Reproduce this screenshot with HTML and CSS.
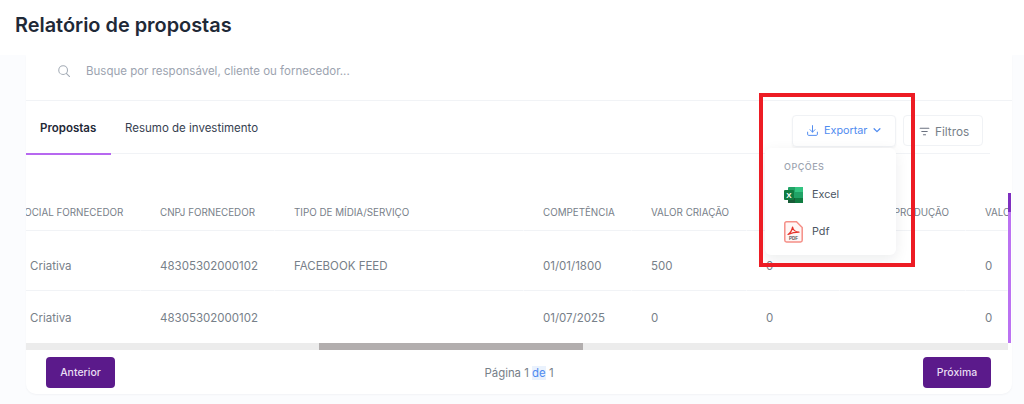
FILE: index.html
```html
<!DOCTYPE html>
<html lang="en">

<head>
	<meta charset="UTF-8">
	<title>Relatório de propostas</title>
	<link rel="stylesheet" href="styles.css">
</head>

<body>

	<header class="page-header">
		<h1 class="page-title">Relatório de propostas</h1>
	</header>

	<main class="page-content">
		<section class="card">

			<!-- Search -->
			<div class="search-row">
				<svg class="search-icon" viewBox="0 0 24 24" fill="none" stroke="#a3abb5" stroke-width="1.8" stroke-linecap="round">
					<circle cx="10.5" cy="10.5" r="7.5"/>
					<path d="M16 16l5.5 5.5"/>
				</svg>
				<span class="search-text">Busque por responsável, cliente ou fornecedor...</span>
			</div>

			<!-- Tabs -->
			<div class="tabs-row">
				<div class="tabs">
					<div class="tab tab-active">Propostas</div>
					<div class="tab">Resumo de investimento</div>
				</div>
				<div class="tab-actions">
					<div class="btn-export">
						<svg class="btn-icon" viewBox="0 0 24 24" fill="none" stroke="#4f8bf0" stroke-width="1.8" stroke-linecap="round" stroke-linejoin="round">
							<path d="M12 3v12M7.500 10.500L12 15l4.500-4.500"/>
							<path d="M3 15v4a2 2 0 0 0 2 2h14a2 2 0 0 0 2-2v-4"/>
						</svg>
						<span>Exportar</span>
						<svg class="btn-chevron" viewBox="0 0 12 12" fill="none" stroke="#4f8bf0" stroke-width="1.5" stroke-linecap="round" stroke-linejoin="round">
							<path d="M2.500 4.500L6 8l3.500-3.500"/>
						</svg>
					</div>
					<div class="btn-filter">
						<svg class="btn-icon" viewBox="0 0 24 24" fill="none" stroke="#6b7280" stroke-width="2" stroke-linecap="round">
							<path d="M4 6h16M7 12h10M10 18h4"/>
						</svg>
						<span>Filtros</span>
					</div>
				</div>
			</div>

			<!-- Table -->
			<div class="table-area">
				<div class="table-clip">
					<table class="report-table">
						<thead>
							<tr>
								<th class="col-razao">RAZÃO SOCIAL FORNECEDOR</th>
								<th class="col-cnpj">CNPJ FORNECEDOR</th>
								<th class="col-tipo">TIPO DE MÍDIA/SERVIÇO</th>
								<th class="col-comp">COMPETÊNCIA</th>
								<th class="col-criacao">VALOR CRIAÇÃO</th>
								<th class="col-midia">VALOR MÍDIA</th>
								<th class="col-prod">VALOR PRODUÇÃO</th>
								<th class="col-total">VALOR TOTAL</th>
							</tr>
						</thead>
						<tbody>
							<tr>
								<td>Criativa</td>
								<td>48305302000102</td>
								<td>FACEBOOK FEED</td>
								<td>01/01/1800</td>
								<td>500</td>
								<td>0</td>
								<td></td>
								<td>0</td>
							</tr>
							<tr>
								<td>Criativa</td>
								<td>48305302000102</td>
								<td></td>
								<td>01/07/2025</td>
								<td>0</td>
								<td>0</td>
								<td></td>
								<td>0</td>
							</tr>
						</tbody>
					</table>
				</div>
				<div class="v-scroll">
					<div class="v-scroll-top"></div>
				</div>
			</div>

			<div class="h-scroll">
				<div class="h-scroll-thumb"></div>
			</div>

			<!-- Pagination -->
			<div class="pager">
				<div class="pager-btn">Anterior</div>
				<div class="pager-text">Página 1 <span class="pager-select">de</span> 1</div>
				<div class="pager-btn pager-btn-next">Próxima</div>
			</div>
		</section>
	</main>

	<!-- Export menu -->
	<div class="export-menu">
		<div class="export-label">OPÇÕES</div>
		<div class="export-item">
			<svg class="icon-excel" viewBox="0 0 19 16">
				<rect x="4" y="0" width="15" height="16" rx="1" fill="#21a366"/>
				<rect x="11" y="0" width="8" height="5" fill="#33c481"/>
				<rect x="11" y="11" width="8" height="5" fill="#107c41"/>
				<rect x="4" y="11" width="7" height="5" fill="#185c37"/>
				<rect x="0" y="3" width="10" height="10" rx="1" fill="#107c41"/>
				<text x="5" y="11" class="excel-x">X</text>
			</svg>
			<span>Excel</span>
		</div>
		<div class="export-item">
			<svg class="icon-pdf" viewBox="0 0 19 22">
				<path d="M.8 2.500a1.700 1.700 0 0 1 1.700-1.700h10l5.700 5.700v12.700a1.700 1.700 0 0 1-1.700 1.700h-14a1.700 1.700 0 0 1-1.700-1.700z" fill="#fff6f5" stroke="#f58f87" stroke-width="1.500"/>
				<path d="M4 13.500c2.200-1.200 3.800-3.800 4.600-7.500.3 2.700 2.100 4.700 6.400 5.200-3.800 0-7 .6-11 2.300z" fill="none" stroke="#e5332a" stroke-width="1.200" stroke-linejoin="round"/>
				<text x="9.500" y="19" class="pdf-label">PDF</text>
			</svg>
			<span>Pdf</span>
		</div>
	</div>

	<!-- Red highlight -->
	<div class="highlight-box"></div>

</body>

</html>
```

FILE: styles.css
```css
*
{
	box-sizing: border-box;
}

body
{
	margin: 0;
	height: 404px;
	overflow: hidden;
	display: flex;
	flex-direction: column;
	font-family: Inter, "Liberation Sans", sans-serif;
	background-color: #ffffff;
	color: #778089;
}

.page-header
{
	height: 55px;
	flex: none;
	padding: 12px 15px 0;
}

.page-title
{
	margin: 0;
	font-size: 19.900px;
	line-height: 26px;
	font-weight: 600;
	color: #1f2937;
}

.page-content
{
	flex: 1;
	padding: 0 12px 10px 26px;
	background-color: #fbfcfe;
}

.card
{
	height: 339px;
	display: flex;
	flex-direction: column;
	background-color: #ffffff;
	border-radius: 0 0 10px 10px;
	box-shadow: 0 1px 2px rgba(17, 24, 39, 0.04);
	overflow: hidden;
}

.search-row
{
	height: 46px;
	flex: none;
	display: flex;
	align-items: center;
	gap: 15px;
	padding: 0 0 14px 31px;
	border-bottom: 1px solid #f1f3f6;
}

.search-icon
{
	width: 14px;
	height: 14px;
}

.search-text
{
	font-size: 11.500px;
	color: #9ca3af;
}

.tabs-row
{
	height: 53px;
	flex: none;
	display: flex;
	justify-content: space-between;
	margin-right: 22px;
	border-bottom: 1px solid #f1f3f6;
}

.tabs
{
	flex: 1;
	display: flex;
}

.tab
{
	padding: 20px 14px 0;
	font-size: 11.500px;
	color: #374151;
}

.tab-active
{
	width: 85px;
	margin-bottom: -2px;
	font-weight: 600;
	color: #1f2937;
	border-bottom: 2px solid #b768f0;
}

.tab-actions
{
	display: flex;
	gap: 7px;
	padding: 14px 7px 0 0;
	align-items: flex-start;
}

.btn-export,
.btn-filter
{
	display: flex;
	align-items: center;
	border: 1px solid #f0f2f5;
	border-radius: 4px;
}

.btn-export
{
	width: 104px;
	height: 32px;
	gap: 5px;
	padding: 0 0 2px 13px;
	font-size: 10.800px;
	color: #4f8bf0;
	box-shadow: 0 1px 2px rgba(17, 24, 39, 0.05);
}

.btn-filter
{
	width: 80px;
	height: 31px;
	gap: 4px;
	padding: 2px 0 0 14px;
	font-size: 11.800px;
	color: #778089;
}

.btn-icon
{
	width: 13px;
	height: 13px;
}

.btn-chevron
{
	width: 10px;
	height: 10px;
}

.table-area
{
	flex: 1;
	display: flex;
	min-height: 0;
}

.table-clip
{
	flex: 1;
	overflow: hidden;
}

.report-table
{
	width: 1048px;
	margin-left: -66px;
	border-collapse: separate;
	border-spacing: 0;
	table-layout: fixed;
}

.col-razao { width: 181px; }
.col-cnpj { width: 134px; }
.col-tipo { width: 249px; }
.col-comp { width: 108px; }
.col-criacao { width: 115px; }
.col-midia { width: 93px; }
.col-prod { width: 126px; }
.col-total { width: 42px; }

.report-table th,
.report-table td
{
	padding: 0 0 0 19px;
	text-align: left;
	white-space: nowrap;
	border-bottom: 1px solid #f1f3f6;
	border-right: 1px solid #ffffff;
}

.report-table th
{
	height: 77px;
	padding-top: 41px;
	font-size: 9.800px;
	font-weight: 400;
	color: #778089;
}

.report-table th:first-child
{
	padding-left: 22px;
}

.report-table td
{
	font-size: 11.500px;
	color: #778089;
}

.report-table td:first-child
{
	padding-left: 70px;
}

.report-table tbody tr:nth-child(1) td
{
	height: 60px;
	padding-top: 10px;
}

.report-table tbody tr:nth-child(2) td
{
	height: 52px;
	padding-top: 2px;
	border-bottom: none;
}

.v-scroll
{
	width: 3px;
	flex: none;
	margin-top: 39px;
	margin-right: 1px;
	background-color: #bb72f2;
}

.v-scroll-top
{
	height: 19px;
	background-color: #7e2fc0;
}

.h-scroll
{
	height: 7px;
	flex: none;
	background-color: #ececec;
	margin-right: 4px;
}

.h-scroll-thumb
{
	width: 264px;
	height: 7px;
	margin-left: 293px;
	background-color: #b2aeae;
}

.pager
{
	height: 44px;
	flex: none;
	display: flex;
	justify-content: space-between;
	align-items: flex-start;
	padding: 7px 21px 0 20px;
}

.pager-btn
{
	width: 69px;
	height: 31px;
	display: flex;
	justify-content: center;
	align-items: center;
	background-color: #5b1a8b;
	border-radius: 4px;
	font-size: 10.500px;
	font-weight: 500;
	color: #e9dff3;
}

.pager-btn-next
{
	width: 68px;
}

.pager-text
{
	padding-top: 9px;
	font-size: 11.400px;
	color: #778089;
}

.pager-select
{
	color: #4f8bf0;
	background-color: #eaf2fd;
}

.export-menu
{
	position: absolute;
	left: 765px;
	top: 148px;
	width: 131px;
	height: 107px;
	padding: 13px 0 0 19px;
	background-color: #ffffff;
	border-radius: 6px;
	box-shadow: 0 4px 14px rgba(17, 24, 39, 0.08);
}

.export-label
{
	height: 11px;
	margin-bottom: 4px;
	font-size: 9px;
	line-height: 11px;
	font-weight: 500;
	letter-spacing: 0.5px;
	color: #9ca3af;
}

.export-item
{
	height: 37px;
	display: flex;
	align-items: center;
	gap: 9px;
	font-size: 10.800px;
	color: #4b5563;
}

.icon-excel
{
	width: 19px;
	height: 16px;
}

.icon-pdf
{
	width: 19px;
	height: 22px;
}

.excel-x
{
	font-family: "Liberation Sans", sans-serif;
	font-size: 8px;
	font-weight: 700;
	fill: #ffffff;
	text-anchor: middle;
}

.pdf-label
{
	font-family: "Liberation Sans", sans-serif;
	font-size: 4.500px;
	font-weight: 700;
	fill: #555555;
	text-anchor: middle;
}

.highlight-box
{
	position: absolute;
	left: 759px;
	top: 93px;
	width: 156px;
	height: 174px;
	border: 4px solid #ed1c24;
}
```
